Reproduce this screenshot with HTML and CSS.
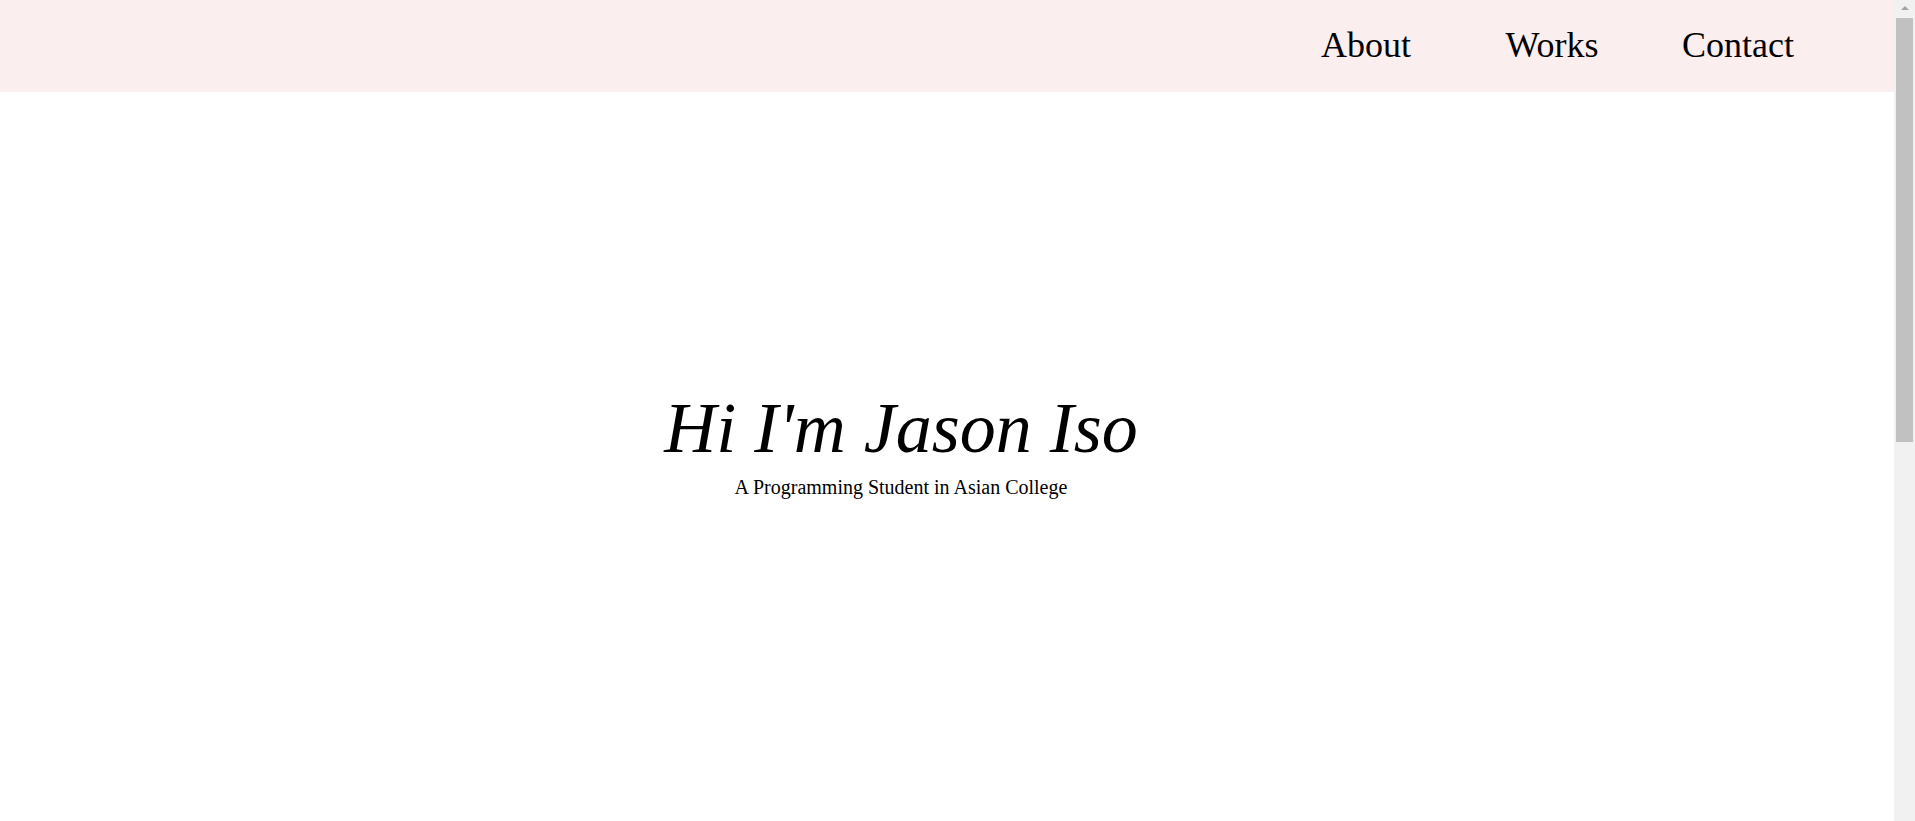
FILE: index.html
```html
<!DOCTYPE html>
<html lang="en">
<head>
<meta charset="utf-8">
<title>Jason Iso</title>
<link rel="stylesheet" href="styles.css">
</head>
<body>
<header class="site-header">
  <nav class="nav">
    <ul class="nav-list">
      <li class="nav-item"><a class="nav-link" href="#about">About</a></li>
      <li class="nav-item"><a class="nav-link" href="#works">Works</a></li>
      <li class="nav-item"><a class="nav-link" href="#contact">Contact</a></li>
    </ul>
  </nav>
</header>
<main class="hero">
  <h1 class="hero-title">Hi I'm Jason Iso</h1>
  <p class="hero-subtitle">A Programming Student in Asian College</p>
</main>
<div class="scrollbar" aria-hidden="true">
  <div class="scrollbar-arrow"></div>
  <div class="scrollbar-thumb"></div>
</div>
</body>
</html>
```
FILE: styles.css
```css
html, body {
  margin: 0;
  padding: 0;
}

body {
  font-family: "Liberation Serif", "Times New Roman", serif;
  color: #000;
  background: #fff;
}

.site-header {
  height: 92px;
  box-sizing: border-box;
  background: #fbeeee;
  display: flex;
  justify-content: flex-end;
  align-items: flex-start;
  padding-top: 24px;
  padding-right: 84px;
}

.nav-list {
  list-style: none;
  margin: 0;
  padding: 0;
  display: flex;
}

.nav-item {
  width: 186px;
  text-align: center;
}

.nav-link {
  font-size: 36px;
  color: #000;
  text-decoration: none;
}

.hero {
  height: 1440px;
  box-sizing: border-box;
  padding-top: 295px;
  padding-right: 113px;
  text-align: center;
}

.hero-title {
  margin: 0;
  font-size: 72px;
  font-style: italic;
  font-weight: normal;
}

.hero-subtitle {
  margin: 6px 0 0;
  font-size: 20px;
}

/* static rendition of the window scrollbar seen in the reference */
.scrollbar {
  position: fixed;
  top: 0;
  right: 0;
  width: 21px;
  height: 100vh;
  background: #f1f1f1;
  display: flex;
  flex-direction: column;
  align-items: flex-end;
  padding-right: 2px;
  box-sizing: border-box;
}

.scrollbar-arrow {
  width: 0;
  height: 0;
  margin: 6px 4px 0 0;
  border-left: 4px solid transparent;
  border-right: 4px solid transparent;
  border-bottom: 4px solid #a3a3a3;
}

.scrollbar-thumb {
  width: 17px;
  height: 424px;
  margin-top: 8px;
  background: #c1c1c1;
}
```
